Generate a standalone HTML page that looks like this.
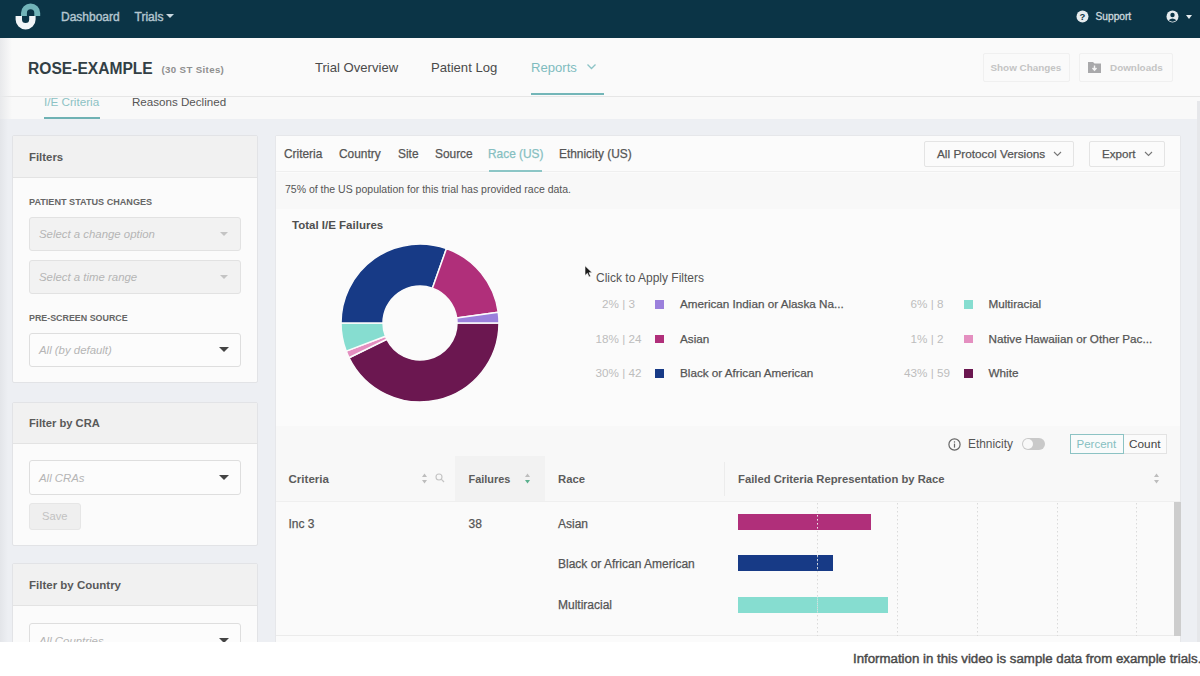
<!DOCTYPE html>
<html><head><meta charset="utf-8">
<style>
*{box-sizing:border-box;margin:0;padding:0}
html,body{width:1200px;height:676px;overflow:hidden;background:#edeff3;font-family:"Liberation Sans",sans-serif;color:#555}
.a{position:absolute;white-space:nowrap}
#nav{position:absolute;left:0;top:0;width:1200px;height:38px;background:#0b3446}
#hdr{position:absolute;left:0;top:38px;width:1200px;height:58px;background:#fafafa;z-index:2}
.card{position:absolute;background:#fbfbfb;border:1px solid #e2e3e6;border-radius:2px}
.card .ch{position:absolute;left:0;top:0;right:0;background:#f1f1f1;border-bottom:1px solid #e3e3e3}
.sel{position:absolute;border:1px solid #dedede;border-radius:3px;background:#fcfcfc}
.sel span{position:absolute;left:9px;top:50%;transform:translateY(-50%);font-style:italic;color:#b5b5b5;font-size:11.4px}
.caret{position:absolute;width:0;height:0;border-left:5px solid transparent;border-right:5px solid transparent;border-top:5px solid #444}
.lbl{font-weight:bold;color:#666;font-size:9.1px;letter-spacing:0}
.tab{font-size:11.9px;color:#555;line-height:14px;-webkit-text-stroke:0.25px #555}
.btn{border:1px solid #e4e4e4;border-radius:2px;background:#fbfbfb}
.pct{font-size:11.7px;color:#bdbdbd;line-height:14px}
.lg{font-size:11.7px;color:#555;line-height:14px;-webkit-text-stroke:0.25px #555}
.th{font-size:11.57px;font-weight:bold;color:#5c5c5c;line-height:14px}
.td{font-size:12px;color:#555;line-height:14px;-webkit-text-stroke:0.25px #555}
</style></head><body>
<!-- NAVBAR -->
<div id="nav">
  <svg class="a" style="left:0;top:0" width="60" height="38" viewBox="0 0 60 38">
    <path d="M21 13 A9.6 9.6 0 0 1 40.2 13 L40.2 16 L34.3 16 L34.3 13 A3.7 3.7 0 0 0 26.9 13 L26.9 16 L21 16 Z" fill="#72b4b9"/>
    <path d="M15.6 16 L22 16 L22 19.5 A3.6 3.6 0 0 0 29.2 19.5 L29.2 16 L35.6 16 L35.6 19.5 A10 10 0 0 1 15.6 19.5 Z" fill="#f2f5f8"/>
  </svg>
  <div class="a" style="left:61px;top:9.5px;font-size:12px;color:#b4c6d0;-webkit-text-stroke:0.4px #b4c6d0;line-height:14px">Dashboard</div>
  <div class="a" style="left:134.5px;top:9.5px;font-size:12px;color:#b4c6d0;-webkit-text-stroke:0.4px #b4c6d0;line-height:14px">Trials</div>
  <div class="caret" style="left:166px;top:14px;border-top-color:#c9d8e0;border-left-width:4px;border-right-width:4px;border-top-width:4px"></div>
  <svg class="a" style="left:1076px;top:10px" width="13" height="13" viewBox="0 0 13 13"><circle cx="6.5" cy="6.5" r="6" fill="#e6ecef"/><text x="6.5" y="10" text-anchor="middle" font-family="Liberation Sans" font-weight="bold" font-size="9.5" fill="#0b3446">?</text></svg>
  <div class="a" style="left:1095.5px;top:10px;font-size:10.2px;color:#c9d5db;-webkit-text-stroke:0.35px #c9d5db;line-height:13px">Support</div>
  <svg class="a" style="left:1166px;top:10px" width="13" height="13" viewBox="0 0 13 13"><circle cx="6.5" cy="6.5" r="6" fill="#e6ecef"/><circle cx="6.5" cy="5" r="2.2" fill="#0b3446"/><path d="M2.6 10.3 Q6.5 6.5 10.4 10.3 Q6.5 13 2.6 10.3Z" fill="#0b3446"/></svg>
  <div class="caret" style="left:1186px;top:15px;border-top-color:#e6ecef;border-left-width:3.5px;border-right-width:3.5px;border-top-width:4px"></div>
</div>

<!-- HEADER -->
<div id="hdr">
  <div class="a" style="left:28px;top:22px;font-size:15.6px;font-weight:bold;color:#323f45;line-height:18px">ROSE-EXAMPLE</div>
  <div class="a" style="left:161.5px;top:26px;font-size:9.7px;letter-spacing:0.35px;font-weight:bold;color:#8f8f8f;line-height:12px">(30 ST Sites)</div>
  <div class="a" style="left:315px;top:22px;font-size:13.1px;color:#4a4a4a;line-height:16px">Trial Overview</div>
  <div class="a" style="left:431px;top:22px;font-size:13.1px;color:#4a4a4a;line-height:16px">Patient Log</div>
  <div class="a" style="left:531px;top:22px;font-size:13.1px;color:#7fbcbf;line-height:16px">Reports</div>
  <svg class="a" style="left:586px;top:63px;top:25px" width="11" height="8" viewBox="0 0 11 8"><path d="M1.5 1.5 L5.5 5.5 L9.5 1.5" stroke="#8cc3c6" stroke-width="1.3" fill="none"/></svg>
  <div class="a" style="left:531px;top:55px;width:73px;height:2px;background:#73b6b8"></div>
  <div class="a" style="left:0;top:57.5px;width:1200px;height:1px;background:#e6e6e6"></div>
  <div class="a" style="left:983px;top:15px;width:87px;height:29px;border:1px solid #f0f0f0;border-radius:2px"></div>
  <div class="a" style="left:990.5px;top:24px;font-size:9.9px;font-weight:bold;color:#c4c4c4;line-height:12px">Show Changes</div>
  <div class="a" style="left:1079px;top:15px;width:94px;height:29px;border:1px solid #f0f0f0;border-radius:2px"></div>
  <svg class="a" style="left:1088px;top:24px" width="14" height="12" viewBox="0 0 14 12"><path d="M0 0 H5 L6.5 1.5 H13 V11 H0Z" fill="#a9a9ab"/><path d="M6.5 3.5 V8 M4.5 6 L6.5 8.3 L8.5 6" stroke="#f5f5f5" stroke-width="1.4" fill="none"/></svg>
  <div class="a" style="left:1110px;top:24px;font-size:9.9px;font-weight:bold;color:#c4c4c4;line-height:12px">Downloads</div>
</div>
<div class="a" style="left:0;top:96px;width:1200px;height:23px;background:#f9f9f9;overflow:hidden">
  <div class="a" style="left:44px;top:-1px;font-size:11.7px;color:#8cc2c4;line-height:14px">I/E Criteria</div>
  <div class="a" style="left:132px;top:-1px;font-size:11.6px;color:#555;line-height:14px">Reasons Declined</div>
  <div class="a" style="left:44px;top:21px;width:56px;height:2px;background:#6fb2b4"></div>
</div>

<div class="a" style="left:0;top:38px;width:12px;height:81px;background:linear-gradient(90deg,#e8e9eb,rgba(250,250,250,0));z-index:3"></div>
<!-- LEFT EDGE -->
<div class="a" style="left:0;top:119px;width:8px;height:523px;background:linear-gradient(90deg,#e3e5e9,#edeff3)"></div>
<!-- SIDEBAR -->
<div class="card" style="left:12px;top:135px;width:246px;height:248px">
  <div class="ch" style="height:42px"></div>
  <div class="a" style="left:16px;top:15px;font-size:11.4px;font-weight:bold;color:#595959;line-height:13px">Filters</div>
  <div class="a lbl" style="left:16px;top:61px;line-height:11px">PATIENT STATUS CHANGES</div>
  <div class="sel" style="left:16px;top:81px;width:212px;height:34px;background:#f2f2f2;border-color:#e2e2e2"><span>Select a change option</span><div class="caret" style="left:190px;top:14px;border-top-color:#c4c4c4;border-left-width:4.5px;border-right-width:4.5px;border-top-width:4px"></div></div>
  <div class="sel" style="left:16px;top:124px;width:212px;height:34px;background:#f2f2f2;border-color:#e2e2e2"><span>Select a time range</span><div class="caret" style="left:190px;top:14px;border-top-color:#c4c4c4;border-left-width:4.5px;border-right-width:4.5px;border-top-width:4px"></div></div>
  <div class="a lbl" style="left:16px;top:177px;line-height:11px;font-size:8.9px">PRE-SCREEN SOURCE</div>
  <div class="sel" style="left:16px;top:197px;width:212px;height:34px"><span>All (by default)</span><div class="caret" style="left:189px;top:13px"></div></div>
</div>
<div class="card" style="left:12px;top:402px;width:246px;height:144px">
  <div class="ch" style="height:41px"></div>
  <div class="a" style="left:16px;top:14px;font-size:11.2px;font-weight:bold;color:#595959;line-height:13px">Filter by CRA</div>
  <div class="sel" style="left:16px;top:57px;width:212px;height:35px"><span>All CRAs</span><div class="caret" style="left:189px;top:14px"></div></div>
  <div class="a" style="left:16px;top:100px;width:52px;height:27px;background:#efefef;border:1px solid #e6e6e6;border-radius:3px"></div>
  <div class="a" style="left:29px;top:107px;font-size:11.2px;color:#c2c2c2;line-height:13px">Save</div>
</div>
<div class="card" style="left:12px;top:563px;width:246px;height:120px">
  <div class="ch" style="height:42px"></div>
  <div class="a" style="left:16px;top:15px;font-size:11.5px;font-weight:bold;color:#595959;line-height:13px">Filter by Country</div>
  <div class="sel" style="left:16px;top:59px;width:212px;height:35px"><span>All Countries</span><div class="caret" style="left:189px;top:14px"></div></div>
</div>

<!-- MAIN PANEL -->
<div class="a" style="left:275px;top:135px;width:906px;height:520px;background:#fbfbfb;border:1px solid #e6e7ea;border-radius:2px"></div>
<div class="a" style="left:276px;top:136px;width:904px;height:36px;background:#fbfbfb;border-bottom:1px solid #efefef"></div>
<div class="a tab" style="left:284px;top:147px">Criteria</div>
<div class="a tab" style="left:339px;top:147px">Country</div>
<div class="a tab" style="left:398px;top:147px">Site</div>
<div class="a tab" style="left:435px;top:147px">Source</div>
<div class="a tab" style="left:488px;top:147px;color:#86bfc1;-webkit-text-stroke-color:#86bfc1">Race (US)</div>
<div class="a tab" style="left:559px;top:147px">Ethnicity (US)</div>
<div class="a" style="left:489px;top:170px;width:53px;height:2px;background:#8cc6c6"></div>
<div class="a btn" style="left:924px;top:141px;width:150px;height:26px"></div>
<div class="a tab" style="left:937px;top:147px;font-size:11.8px">All Protocol Versions</div>
<svg class="a" style="left:1053px;top:151px" width="9" height="6" viewBox="0 0 9 6"><path d="M1 1 L4.5 4.5 L8 1" stroke="#777" stroke-width="1.1" fill="none"/></svg>
<div class="a btn" style="left:1089px;top:141px;width:76px;height:26px"></div>
<div class="a tab" style="left:1102px;top:147px;font-size:11.6px">Export</div>
<svg class="a" style="left:1144px;top:151px" width="9" height="6" viewBox="0 0 9 6"><path d="M1 1 L4.5 4.5 L8 1" stroke="#777" stroke-width="1.1" fill="none"/></svg>
<div class="a" style="left:276px;top:173px;width:904px;height:36px;background:#f8f8f8"></div>
<div class="a" style="left:285px;top:183px;font-size:10.5px;color:#555;line-height:12px">75% of the US population for this trial has provided race data.</div>
<div class="a" style="left:292px;top:218.5px;font-size:11.5px;font-weight:bold;color:#4f4f4f;line-height:13px">Total I/E Failures</div>
<svg class="a" style="left:0;top:0" width="1200" height="676">
  <path d="M499.00 323.00 A79.0 79.0 0 0 1 349.05 357.74 L386.77 339.27 A37.0 37.0 0 0 0 457.00 323.00 Z" fill="#6b1750" stroke="#fbfbfb" stroke-width="1.5" stroke-linejoin="round"/>
  <path d="M349.05 357.74 A79.0 79.0 0 0 1 346.18 351.14 L385.43 336.18 A37.0 37.0 0 0 0 386.77 339.27 Z" fill="#e48fc0" stroke="#fbfbfb" stroke-width="1.5" stroke-linejoin="round"/>
  <path d="M346.18 351.14 A79.0 79.0 0 0 1 341.00 323.00 L383.00 323.00 A37.0 37.0 0 0 0 385.43 336.18 Z" fill="#86ddd0" stroke="#fbfbfb" stroke-width="1.5" stroke-linejoin="round"/>
  <path d="M341.00 323.00 A79.0 79.0 0 0 1 446.46 248.56 L432.39 288.14 A37.0 37.0 0 0 0 383.00 323.00 Z" fill="#173a86" stroke="#fbfbfb" stroke-width="1.5" stroke-linejoin="round"/>
  <path d="M446.46 248.56 A79.0 79.0 0 0 1 498.26 312.24 L456.66 317.96 A37.0 37.0 0 0 0 432.39 288.14 Z" fill="#b02f7a" stroke="#fbfbfb" stroke-width="1.5" stroke-linejoin="round"/>
  <path d="M498.26 312.24 A79.0 79.0 0 0 1 499.00 323.00 L457.00 323.00 A37.0 37.0 0 0 0 456.66 317.96 Z" fill="#9b80dc" stroke="#fbfbfb" stroke-width="1.5" stroke-linejoin="round"/>
</svg>
<!-- LEGEND -->
<svg class="a" style="left:584px;top:265px" width="9" height="13" viewBox="0 0 9 13"><path d="M1 0.8 L1 10.5 L3.4 8.3 L5 12 L6.6 11.3 L5 7.7 L8.2 7.7 Z" fill="#1a1a1a" stroke="#fff" stroke-width="0.6"/></svg>
<div class="a" style="left:596px;top:271px;font-size:12px;color:#555;line-height:14px">Click to Apply Filters</div>
<div class="a pct" style="left:578.5px;top:297px;width:80px;text-align:center">2% | 3</div>
<div class="a" style="left:655px;top:300.0px;width:8.5px;height:8.5px;background:#9b80dc"></div>
<div class="a lg" style="left:680px;top:297px">American Indian or Alaska Na...</div>
<div class="a pct" style="left:578.5px;top:331.7px;width:80px;text-align:center">18% | 24</div>
<div class="a" style="left:655px;top:334.7px;width:8.5px;height:8.5px;background:#b02f7a"></div>
<div class="a lg" style="left:680px;top:331.7px">Asian</div>
<div class="a pct" style="left:578.5px;top:366.2px;width:80px;text-align:center">30% | 42</div>
<div class="a" style="left:655px;top:369.2px;width:8.5px;height:8.5px;background:#173a86"></div>
<div class="a lg" style="left:680px;top:366.2px">Black or African American</div>
<div class="a pct" style="left:887px;top:297px;width:80px;text-align:center">6% | 8</div>
<div class="a" style="left:964px;top:300.0px;width:8.5px;height:8.5px;background:#86ddd0"></div>
<div class="a lg" style="left:988.5px;top:297px">Multiracial</div>
<div class="a pct" style="left:887px;top:331.7px;width:80px;text-align:center">1% | 2</div>
<div class="a" style="left:964px;top:334.7px;width:8.5px;height:8.5px;background:#e48fc0"></div>
<div class="a lg" style="left:988.5px;top:331.7px">Native Hawaiian or Other Pac...</div>
<div class="a pct" style="left:887px;top:366.2px;width:80px;text-align:center">43% | 59</div>
<div class="a" style="left:964px;top:369.2px;width:8.5px;height:8.5px;background:#6b1750"></div>
<div class="a lg" style="left:988.5px;top:366.2px">White</div>
<!-- TABLE -->
<div class="a" style="left:276px;top:426px;width:904px;height:75px;background:#f8f8f8"></div>
<div class="a" style="left:276px;top:501px;width:904px;height:135px;background:#fafafa;border-top:1px solid #efefef"></div>
<div class="a" style="left:276px;top:635px;width:904px;height:1px;background:#ebebeb"></div>
<div class="a" style="left:455px;top:456px;width:90px;height:45px;background:#f2f2f2"></div>
<div class="a" style="left:724px;top:462px;width:1px;height:34px;background:#ececec"></div>
<!-- toggle row -->
<svg class="a" style="left:948px;top:438px" width="13" height="13" viewBox="0 0 13 13"><circle cx="6.5" cy="6.5" r="5.6" stroke="#666" stroke-width="1.2" fill="none"/><rect x="5.9" y="5.6" width="1.2" height="4" fill="#666"/><rect x="5.9" y="3.3" width="1.2" height="1.3" fill="#666"/></svg>
<div class="a" style="left:968px;top:437px;font-size:11.9px;color:#555;line-height:14px">Ethnicity</div>
<div class="a" style="left:1022px;top:437.5px;width:23px;height:12px;border-radius:6px;background:#c9c9c9"></div>
<div class="a" style="left:1023px;top:438.5px;width:10px;height:10px;border-radius:5px;background:#f8f8f8"></div>
<div class="a" style="left:1123px;top:433.5px;width:44px;height:20px;background:#fbfbfb;border:1px solid #e3e3e3;border-left:none"></div>
<div class="a" style="left:1070px;top:433.5px;width:54px;height:20px;background:#f9fbfb;border:1.3px solid #8cc3c4"></div>
<div class="a" style="left:1076.5px;top:437px;font-size:11.5px;color:#86bfc1;line-height:14px">Percent</div>
<div class="a" style="left:1129px;top:437px;font-size:11.8px;color:#444;line-height:14px">Count</div>
<!-- header row -->
<div class="a th" style="left:288.5px;top:472px">Criteria</div>
<svg class="a" style="left:421px;top:473px" width="7" height="11" viewBox="0 0 7 11"><path d="M3.5 0.5 L6 4 H1Z M3.5 10.5 L6 7 H1Z" fill="#bdbdbd"/></svg>
<svg class="a" style="left:435px;top:473px" width="10" height="10" viewBox="0 0 10 10"><circle cx="4" cy="4" r="3" stroke="#c4c4c4" stroke-width="1.1" fill="none"/><path d="M6.2 6.2 L9 9" stroke="#c4c4c4" stroke-width="1.2"/></svg>
<div class="a th" style="left:468.5px;top:472px;font-size:10.9px">Failures</div>
<svg class="a" style="left:524px;top:473px" width="7" height="11" viewBox="0 0 7 11"><path d="M3.5 0.5 L6 4 H1Z" fill="#bdbdbd"/><path d="M3.5 10.5 L6 7 H1Z" fill="#5bb08e"/></svg>
<div class="a th" style="left:558px;top:472px;font-size:11.3px">Race</div>
<div class="a th" style="left:738px;top:472px;font-size:11.28px">Failed Criteria Representation by Race</div>
<svg class="a" style="left:1153px;top:473px" width="7" height="11" viewBox="0 0 7 11"><path d="M3.5 0.5 L6 4 H1Z M3.5 10.5 L6 7 H1Z" fill="#bdbdbd"/></svg>
<!-- body -->
<div class="a td" style="left:288.5px;top:517px">Inc 3</div>
<div class="a td" style="left:468.5px;top:517px">38</div>
<div class="a td" style="left:558px;top:517px">Asian</div>
<div class="a td" style="left:558px;top:557px">Black or African American</div>
<div class="a td" style="left:558px;top:597.5px">Multiracial</div>
<div class="a" style="left:738px;top:514px;width:133px;height:16px;background:#b02f7a"></div>
<div class="a" style="left:738px;top:555.3px;width:95px;height:16px;background:#173a86"></div>
<div class="a" style="left:738px;top:596.5px;width:150px;height:16px;background:#86ddd0"></div>
<svg class="a" style="left:0;top:0" width="1200" height="676">
  <g stroke="#dadada" stroke-width="1" stroke-dasharray="1.5 2.5">
    <path d="M817.5 503 V636 M897.5 503 V636 M977.5 503 V636 M1057.5 503 V636 M1136.5 503 V636"/>
  </g>
  <path d="M817.5 515 V531 M817.5 556 V572 M817.5 597 V613" stroke="#ffffff" stroke-opacity="0.45" stroke-width="1" stroke-dasharray="1.5 2.5"/>
</svg>
<div class="a" style="left:1174px;top:502px;width:7px;height:134px;background:#cdcdcd"></div>
<div class="a" style="left:1197px;top:101px;width:3px;height:541px;background:#e6e7ea"></div>
<!-- BOTTOM CAPTION -->
<div class="a" style="left:0;top:642px;width:1200px;height:34px;background:#ffffff"></div>
<div class="a" style="left:853px;top:651px;font-size:13.25px;color:#4a4a4a;-webkit-text-stroke:0.45px #4a4a4a;line-height:15px">Information in this video is sample data from example trials.</div>
</body></html>
